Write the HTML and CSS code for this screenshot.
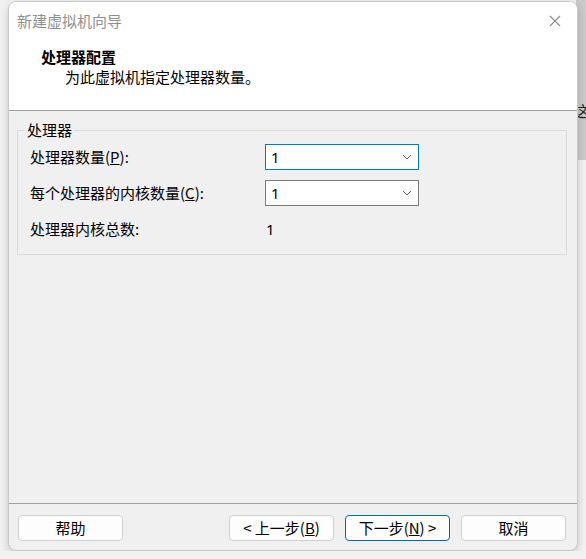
FILE: index.html
```html
<!DOCTYPE html>
<html lang="zh-CN">
<head>
    <meta charset="UTF-8">
    <title>新建虚拟机向导</title>
    <link rel="stylesheet" href="styles.css">
</head>
<body>
    <div class="desktop">
        <div class="backdrop-bar"></div>
        <span class="backdrop-text">这</span>
    </div>

    <div class="window">
        <div class="header">
            <div class="titlebar">
                <span class="title">新建虚拟机向导</span>
                <svg class="close" width="12" height="12" viewBox="0 0 12 12">
                    <path d="M1 1 L11 11 M11 1 L1 11" stroke="#8c8c8c" stroke-width="1.1" fill="none"/>
                </svg>
            </div>
            <div class="heading">处理器配置</div>
            <div class="subheading">为此虚拟机指定处理器数量。</div>
        </div>

        <div class="content">
            <fieldset class="group">
                <legend>处理器</legend>
                <div class="rows">
                    <label>处理器数量(<u>P</u>):</label>
                    <div class="combo focused">
                        <span>1</span>
                        <svg width="10" height="6" viewBox="0 0 10 6"><path d="M1 1 L5 5 L9 1" stroke="#555" stroke-width="1" fill="none"/></svg>
                    </div>

                    <label>每个处理器的内核数量(<u>C</u>):</label>
                    <div class="combo">
                        <span>1</span>
                        <svg width="10" height="6" viewBox="0 0 10 6"><path d="M1 1 L5 5 L9 1" stroke="#555" stroke-width="1" fill="none"/></svg>
                    </div>

                    <label>处理器内核总数:</label>
                    <div class="total">1</div>
                </div>
            </fieldset>
        </div>

        <div class="footer">
            <button class="btn">帮助</button>
            <div class="spacer"></div>
            <button class="btn">&lt; 上一步(<u>B</u>)</button>
            <button class="btn default">下一步(<u>N</u>) &gt;</button>
            <button class="btn">取消</button>
        </div>
    </div>
</body>
</html>
```

FILE: styles.css
```css
body {
    margin: 0;
    background-color: #f2f2f2;
    font-family: "Noto Sans CJK SC", "Noto Sans", sans-serif;
    font-size: 15px;
    color: #000000;
    overflow: hidden;
}
.desktop {
    position: absolute;
    top: 0;
    left: 0;
    width: 586px;
    height: 559px;
}
.backdrop-bar {
    position: absolute;
    top: 0;
    right: 0;
    width: 10px;
    height: 160px;
    background-color: #cbcbcb;
}
.backdrop-text {
    position: absolute;
    top: 101px;
    left: 574px;
    font-size: 15px;
    line-height: 20px;
    color: #222;
}
.window {
    position: relative;
    margin: 1px 0 0 8px;
    width: 568px;
    height: 548px;
    border: 1px solid #c9c9c9;
    border-radius: 8px;
    background-color: #f0f0f0;
    box-shadow: 0 3px 10px rgba(0, 0, 0, 0.18);
    display: flex;
    flex-direction: column;
    overflow: hidden;
}
.header {
    background-color: #ffffff;
    height: 108px;
    border-bottom: 1px solid #a0a0a0;
}
.titlebar {
    height: 37px;
    display: flex;
    align-items: center;
    justify-content: space-between;
    padding: 0 16px 0 8px;
}
.title {
    color: #8f8f8f;
    line-height: 20px;
}
.close {
    display: block;
}
.heading {
    margin: 8px 0 0 32px;
    font-weight: bold;
    line-height: 20px;
}
.subheading {
    margin: 0 0 0 56px;
    line-height: 20px;
}
.content {
    flex: 1;
    padding: 11px 10px 0 8px;
}
.group {
    margin: 0;
    padding: 6px 12px 12px 12px;
    border: 1px solid #dadada;
}
.group legend {
    margin-left: -5px;
    padding: 0 2px;
    line-height: 16px;
}
.rows {
    display: grid;
    grid-template-columns: 235px 154px;
    grid-auto-rows: 26px;
    row-gap: 10px;
    align-items: center;
}
.rows label {
    line-height: 20px;
}
.combo {
    box-sizing: border-box;
    height: 26px;
    border: 1px solid #7a7a7a;
    background-color: #ffffff;
    display: flex;
    align-items: center;
    justify-content: space-between;
    padding: 0 6px 0 5px;
    font-family: "Noto Sans", sans-serif;
}
.combo.focused {
    border-color: #0078d4;
}
.combo svg {
    display: block;
}
.total {
    padding-left: 1px;
    font-family: "Noto Sans", sans-serif;
}
.footer {
    border-top: 1px solid #a0a0a0;
    padding: 11px 11px 9px 9px;
    display: flex;
    gap: 11px;
}
.spacer {
    flex: 1;
}
.btn {
    box-sizing: border-box;
    width: 105px;
    height: 26px;
    padding: 0;
    border: 1px solid #d0d0d0;
    border-radius: 4px;
    background-color: #fdfdfd;
    font-family: "Noto Sans CJK SC", "Noto Sans", sans-serif;
    font-size: 15px;
    line-height: 20px;
    color: #000000;
}
.btn.default {
    border-color: #0067c0;
}
```
